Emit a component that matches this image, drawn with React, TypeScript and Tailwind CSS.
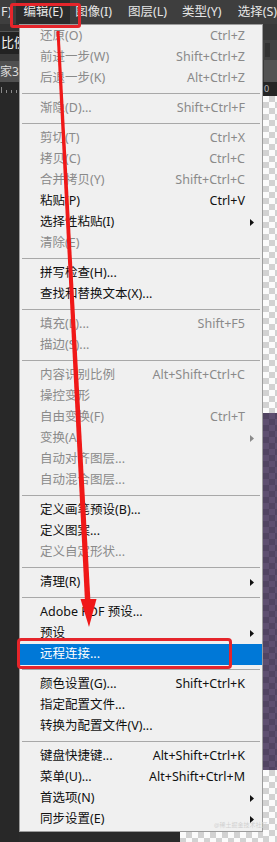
import React from 'react';

type Row =
  | 'sep'
  | { label: string; keys?: string; dim?: boolean; sub?: boolean; active?: boolean };

const rows: Row[] = [
  { label: '还原(O)', keys: 'Ctrl+Z', dim: true },
  { label: '前进一步(W)', keys: 'Shift+Ctrl+Z', dim: true },
  { label: '后退一步(K)', keys: 'Alt+Ctrl+Z', dim: true },
  'sep',
  { label: '渐隐(D)...', keys: 'Shift+Ctrl+F', dim: true },
  'sep',
  { label: '剪切(T)', keys: 'Ctrl+X', dim: true },
  { label: '拷贝(C)', keys: 'Ctrl+C', dim: true },
  { label: '合并拷贝(Y)', keys: 'Shift+Ctrl+C', dim: true },
  { label: '粘贴(P)', keys: 'Ctrl+V' },
  { label: '选择性粘贴(I)', sub: true },
  { label: '清除(E)', dim: true },
  'sep',
  { label: '拼写检查(H)...' },
  { label: '查找和替换文本(X)...' },
  'sep',
  { label: '填充(L)...', keys: 'Shift+F5', dim: true },
  { label: '描边(S)...', dim: true },
  'sep',
  { label: '内容识别比例', keys: 'Alt+Shift+Ctrl+C', dim: true },
  { label: '操控变形', dim: true },
  { label: '自由变换(F)', keys: 'Ctrl+T', dim: true },
  { label: '变换(A)', sub: true, dim: true },
  { label: '自动对齐图层...', dim: true },
  { label: '自动混合图层...', dim: true },
  'sep',
  { label: '定义画笔预设(B)...' },
  { label: '定义图案...' },
  { label: '定义自定形状...', dim: true },
  'sep',
  { label: '清理(R)', sub: true },
  'sep',
  { label: 'Adobe PDF 预设...' },
  { label: '预设', sub: true },
  { label: '远程连接...', active: true },
  'sep',
  { label: '颜色设置(G)...', keys: 'Shift+Ctrl+K' },
  { label: '指定配置文件...' },
  { label: '转换为配置文件(V)...' },
  'sep',
  { label: '键盘快捷键...', keys: 'Alt+Shift+Ctrl+K' },
  { label: '菜单(U)...', keys: 'Alt+Shift+Ctrl+M' },
  { label: '首选项(N)', sub: true },
  { label: '同步设置(E)', sub: true },
];

const checker =
  'bg-[repeating-conic-gradient(#d2d2d2_0%_25%,#fbfbfb_0%_50%)] bg-[length:12px_12px]';

const SubArrow = ({ dim }: { dim?: boolean }) => (
  <svg width="4" height="7" viewBox="0 0 4 7" className={dim ? 'fill-[#8a8a8a]' : 'fill-[#111]'}>
    <path d="M0 0L4 3.5L0 7Z" />
  </svg>
);

const Ruler = () => (
  <div className="h-[11px] bg-[#262626] flex items-end gap-[4px] px-[1px]">
    {[6, 3, 3, 3].map((h, i) => (
      <div key={i} className="w-px bg-[#8a8a8a]" style={{ height: h }} />
    ))}
  </div>
);

export default function App() {
  return (
    <div className="relative w-[277px] h-[842px] overflow-hidden bg-[#282828] font-['Noto_Sans','Noto_Sans_CJK_SC',sans-serif] text-[12.5px]">
      {/* menu bar */}
      <div className="h-[24px] flex items-center bg-[#3e3e3e] text-[#e6e6e6] whitespace-nowrap">
        <span className="w-[18px] pl-[1px]">F)</span>
        <span className="w-[60px] h-full flex items-center justify-center bg-[#2b2b2b]">编辑(E)</span>
        <span className="ml-[5px]">图像(I)</span>
        <span className="ml-[16px]">图层(L)</span>
        <span className="ml-[15px]">类型(Y)</span>
        <span className="ml-[16px]">选择(S)</span>
      </div>

      <div className="flex h-[818px]">
        {/* left edge of the workspace */}
        <div className="w-[19px] flex flex-col overflow-hidden whitespace-nowrap">
          <div className="h-[7px] bg-[#333]" />
          <div className="h-[23px] bg-[#222] border-t border-[#555] flex items-center text-[#f2f2f2] text-[13px] pl-[1px]">比例</div>
          <div className="h-[7px] bg-[#3a3a3a]" />
          <div className="h-[21px] bg-[#505050] flex items-center text-[#dcdcdc] text-[12px]">家3</div>
          <Ruler />
          <div className="flex-1 bg-[#282828]" />
        </div>

        {/* menu + strip below it */}
        <div className="w-[244px] flex flex-col">
          <div className="h-[808px] border border-[#9c9c9c] bg-[#f0f0f0] pt-[1px] pb-[1px] whitespace-nowrap">
            {rows.map((r, i) =>
              r === 'sep' ? (
                <div key={i} className="h-[9px] flex items-center px-[2px]">
                  <div className="h-px w-full bg-[#a8a8a8]" />
                </div>
              ) : (
                <div
                  key={i}
                  className={`h-[21px] grid grid-cols-[1fr_auto_17px] items-center pl-[20px] ${
                    r.active ? 'bg-[#0078d7] text-white' : r.dim ? 'text-[#8a8a8a]' : 'text-[#111]'
                  }`}
                >
                  <span>{r.label}</span>
                  <span>{r.keys}</span>
                  <span className="pl-[5px] flex items-center">{r.sub && <SubArrow dim={r.dim} />}</span>
                </div>
              )
            )}
          </div>
          <div className="h-[10px] flex">
            <div className="w-[161px] bg-[#2a2a2a]" />
            <div className={`flex-1 ${checker}`} />
          </div>
        </div>

        {/* right edge of the workspace */}
        <div className="flex-1 flex flex-col overflow-hidden">
          <div className="h-[16px] bg-[#383838]" />
          <div className="h-[20px] bg-[#424242] flex gap-[3px] px-[2px] items-center">
            <div className="w-[5px] h-[14px] bg-[#333]" />
          </div>
          <div className="h-[22px] bg-[#535353] border-l border-[#3a3a3a]" />
          <div className="h-[14px] bg-[#262626] text-[#bdbdbd] text-[9px] leading-[14px] pl-[1px]">0</div>
          <div className={`h-[317px] ${checker}`} />
          <div className="h-[357px] bg-[repeating-conic-gradient(#5e4f70_0%_25%,#514462_0%_50%)] bg-[length:12px_12px]" />
          <div className={`flex-1 ${checker}`} />
        </div>
      </div>

      {/* annotations drawn over the screenshot */}
      <div className="absolute left-[10px] top-[3px] w-[71px] h-[25px] border-[3px] border-[#e5252b] rounded-[3px]" />
      <div className="absolute left-[17px] top-[638px] w-[215px] h-[31px] border-[3px] border-[#e5252b] rounded-[4px]" />
      <svg className="absolute inset-0 pointer-events-none" width="277" height="842" viewBox="0 0 277 842">
        <path d="M56.5 31 L59.5 31 L90.5 602 L85 602 Z" fill="#f01818" />
        <path d="M80.5 599 L96.5 599 L89 627 Z" fill="#f01818" />
      </svg>
      <div className="absolute left-[214px] top-[822px] text-[6px] leading-none text-[#d0d0d0] whitespace-nowrap">
        @稀土掘金技术社区
      </div>
    </div>
  );
}
